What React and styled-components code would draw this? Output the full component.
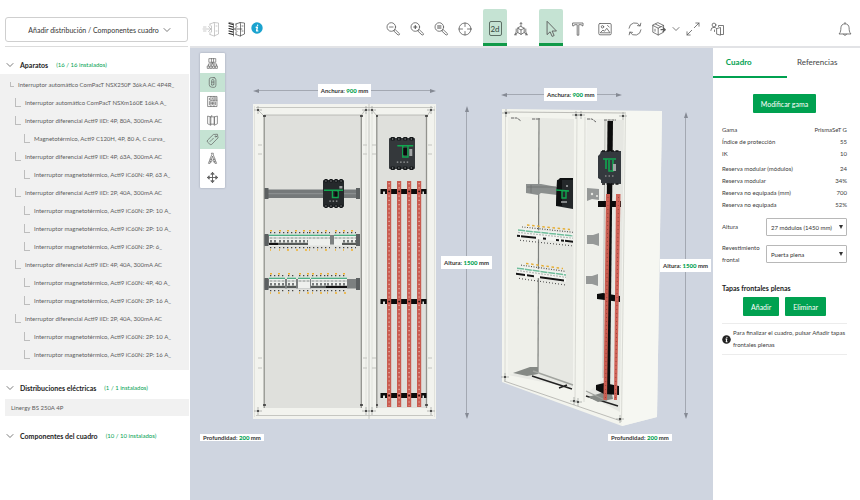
import React from 'react'
import styled, { createGlobalStyle } from 'styled-components'

const GlobalStyle = createGlobalStyle`
  * {
    box-sizing: border-box;
  }
  body {
    margin: 0;
    background: #fff;
    color: #3c3c3c;
    font-family: Lato, "Open Sans", sans-serif;
    font-size: 6px;
    line-height: 12px;
  }
  button, select {
    font-family: inherit;
    cursor: pointer;
  }
`

const green = '#00a150'
const mint = '#c5e3d3'

/* ---------- data ---------- */

const devices = [
  { level: 0, text: 'Interruptor automático ComPacT NSX250F 36kA AC 4P4R_' },
  { level: 1, text: 'Interruptor automático ComPacT NSXm160E 16kA A_' },
  { level: 1, text: 'Interruptor diferencial Acti9 iID: 4P, 80A, 300mA AC' },
  { level: 2, text: 'Magnetotérmico, Acti9 C120H, 4P, 80 A, C curva_' },
  { level: 1, text: 'Interruptor diferencial Acti9 iID: 4P, 63A, 300mA AC' },
  { level: 2, text: 'Interruptor magnetotérmico, Acti9 iC60N: 4P, 63 A_' },
  { level: 1, text: 'Interruptor diferencial Acti9 iID: 2P, 40A, 300mA AC' },
  { level: 2, text: 'Interruptor magnetotérmico, Acti9 iC60N: 2P: 10 A_' },
  { level: 2, text: 'Interruptor magnetotérmico, Acti9 iC60N: 2P: 10 A_' },
  { level: 2, text: 'Interruptor magnetotérmico, Acti9 iC60N: 2P: 6_' },
  { level: 1, text: 'Interruptor diferencial Acti9 iID: 4P, 40A, 300mA AC' },
  { level: 2, text: 'Interruptor magnetotérmico, Acti9 iC60N: 4P, 40 A_' },
  { level: 2, text: 'Interruptor magnetotérmico, Acti9 iC60N: 2P: 16 A_' },
  { level: 1, text: 'Interruptor diferencial Acti9 iID: 2P, 40A, 300mA AC' },
  { level: 2, text: 'Interruptor magnetotérmico, Acti9 iC60N: 2P: 10 A_' },
  { level: 2, text: 'Interruptor magnetotérmico, Acti9 iC60N: 2P: 16 A_' },
]

const general = [
  ['Gama', 'PrismaSeT G'],
  ['Índice de protección', '55'],
  ['IK', '10'],
]

const reserve = [
  ['Reserva modular (módulos)', '24'],
  ['Reserva modular', '34%'],
  ['Reserva no equipada (mm)', '700'],
  ['Reserva no equipada', '52%'],
]

/* ---------- icons ---------- */

const Svg = styled.svg`
  display: block;
  flex: none;
  fill: none;
  stroke: ${props => props.$color || '#5a5a5a'};
  stroke-width: ${props => props.$weight || 0.8};
  stroke-linecap: round;
  stroke-linejoin: round;
`

function Icon({ size = 16, box = 16, color, weight, children }) {
  return (
    <Svg width={size} height={size} viewBox={`0 0 ${box} ${box}`} $color={color} $weight={weight} aria-hidden="true">
      {children}
    </Svg>
  )
}

const Chevron = ({ size = 8 }) => (
  <Icon size={size} box={8}><path d="M1 2.5 4 5.5 7 2.5" /></Icon>
)

const Lens = ({ children }) => (
  <Icon>
    <circle cx="6.3" cy="6" r="4.3" />
    <path d="M9 9.7 10.2 8.6 14.6 12.8Q14.9 13.8 13.5 14Z" />
    {children}
  </Icon>
)

const DoorIcon = ({ faded }) => (
  <Icon size={18} box={18} color={faded ? '#b5b5b5' : '#444'} weight={0.7}>
    <path d="M8 4 12 2.5 16.5 3V14L12 16 8 14.5M12 2.5 12.5 4V16M8 4V6M8 12V14.5M14 6H15M14 11H15" />
    {faded
      ? <path d="M1 9H9M6.5 6.5 9 9 6.5 11.5M1.5 7H4M1.5 11H4M9.5 6V12" />
      : <path d="M14 9H7M9 6.5 6.5 9 9 11.5" />}
    {!faded && <path stroke="#222" strokeWidth="1.2" d="M1 3.5 5 4.5M1 6 5 7M1 8.500 5 9.500M1 11 5 12M1 13.500 5 14.500" />}
    {!faded && <path d="M1 2.5 5.5 3.5V16" />}
  </Icon>
)

const InfoIcon = ({ size, fill }) => (
  <Icon size={size} box={12} color="#fff" weight={1.4}>
    <circle cx="6" cy="6" r="5.7" fill={fill} stroke="none" />
    <path d="M6.6 3.1V3.2M5.2 5.2H6.4L5.6 8.9H6.8" />
  </Icon>
)

const TargetIcon = () => (
  <Icon>
    <circle cx="8" cy="8" r="6" />
    <path d="M8 2V5.5M8 10.5V14M2 8H5.5M10.5 8H14" />
  </Icon>
)

const TwoD = styled.span`
  display: grid;
  place-items: center;
  width: 13px;
  height: 15px;
  border: 1px solid #5c6f65;
  border-radius: 2px;
  color: #34473d;
  font-size: 8px;
`

const CubeIcon = () => (
  <Icon>
    <path d="M8 5.500 11.200 7.200V11.500L8 13.400 4.800 11.500V7.200ZM8 9V13.400M4.800 7.200 8 9 11.200 7.200" />
    <path d="M8 5.500V2M7 2.800 8 1.600 9 2.800M4.800 11.500 2 13.600M3.200 8V11L1.700 13.800H3.500M11.200 11.500 14 13.600M12.800 8V11L14.300 13.800H12.500" />
  </Icon>
)

const PointerIcon = () => (
  <Icon size={18}>
    <path d="M4.5 1.5V13L7.2 10.5 9 14.6 10.8 13.8 9 9.8H12.5Z" />
  </Icon>
)

const TextIcon = () => (
  <Icon><path d="M3 2H13V4.8H12L11.5 3.7H8.800V14.200H7.200V3.700H4.5L4 4.8H3Z" /></Icon>
)

const ImageIcon = () => (
  <Icon>
    <rect x="1.8" y="2.5" width="12.4" height="11.3" rx="1.2" />
    <circle cx="5.5" cy="5.8" r="1.2" />
    <path d="M3.5 11.5 6 9 7.4 10.3 9.8 7.3 12.8 11.5ZM10.5 4.5 12.2 6" />
  </Icon>
)

const RefreshIcon = () => (
  <Icon>
    <path d="M2 7.2A6 6 0 0 1 13 4.6M13.8 2.2 13.2 5 10.5 4.6M14 8.8A6 6 0 0 1 3 11.4M2.2 13.8 2.8 11 5.5 11.4" />
  </Icon>
)

const BoxIcon = () => (
  <Icon>
    <path d="M7.2 1.8 12.6 4.4V11.2L7.2 14 1.8 11.2V4.4ZM1.8 4.4 7.2 7.2 12.6 4.4M7.2 7.2V14M4.5 3.1 9.9 5.8M4 8.2V10.2" />
    <path strokeWidth="1.2" d="M10 8.7H14M12 6.8 14.3 8.7 12 10.6" />
  </Icon>
)

const ExpandIcon = () => (
  <Icon>
    <path d="M9.3 6.7 14 2M10.8 2H14V5.2M6.7 9.3 2 14M2 10.8V14H5.2" />
  </Icon>
)

const UserDoorIcon = () => (
  <Icon>
    <circle cx="5" cy="4" r="1.9" />
    <path d="M1.8 9.500Q1.8 6.300 5 6.300 6.800 6.300 7.500 7.500M9.500 5.500V4.500H14.500V13.500H12M8 7.500 11.500 6.500V14.200L8 13.200ZM5.500 9V10.500" />
  </Icon>
)

const BellIcon = () => (
  <Icon>
    <path d="M2.3 12.7C3.8 11.2 3.8 9 3.9 6.8 4 4.4 5.6 2.8 8 2.8S12 4.4 12.1 6.8C12.2 9 12.2 11.2 13.7 12.7ZM8 2.8V1.5M6.5 13.2Q8 16 9.5 13.2" />
  </Icon>
)

const viewTools = [
  {
    name: 'Esquema',
    icon: <path d="M4 2H12V6.500H4ZM6.700 2V6.500M9.300 2V6.500M8 6.500V8.500M3 11V8.500H13V11M6.300 8.500V11M9.700 8.500V11M2 11H4V14H2ZM5.300 11H7.300V14H5.300ZM8.700 11H10.700V14H8.700ZM12 11H14V14H12Z" />,
  },
  {
    name: 'Cableado',
    active: true,
    icon: <path d="M10 2H6.5Q4 2 4 4.5V10.5Q4 13.5 7 13.8L10 14Q12.2 13.8 12.2 11.3V4.7Q12 2.2 10 2ZM7 11V5.5Q7 4.3 8.3 4.3T9.7 5.5V10.5M7 7.5H9.7M7 10.8Q8.5 12.8 9.7 10.5" />,
  },
  {
    name: 'Equipos',
    icon: <path d="M2.5 1.8H13.5V14.2H2.5ZM6 1.8V14.2M9.8 1.8V14.2M4.2 4V6M4.2 8V12M7.9 3.5V5M6 6.5H13.5M11 3.5H12.4M11 5H12.4M11.6 8.5V12M7.9 8.5V12M6 10H9.8" />,
  },
  {
    name: 'Puertas',
    icon: <path d="M5.5 3.5H10.5V12.5H5.5ZM5.5 3.5 2 2.5V12L5.5 13.7ZM10.5 3.5 14 2.5V12L10.5 13.7ZM7 3V1.8" />,
  },
  {
    name: 'Etiquetas',
    active: true,
    icon: (
      <>
        <path d="M9.5 1.8 14 1.5 14.8 6 7 14Q6 14.8 5 14L1.7 11Q1 10 1.8 9ZM5 10.5 6.2 9.2M7.2 8.5 9 6.5" />
        <circle cx="12" cy="4.3" r="0.8" />
      </>
    ),
  },
  {
    name: 'Cotas',
    icon: <path d="M7 1.5H9V3.5L13 14H11L8 5 5 14H3L7 3.5ZM5 9Q8 11.5 11 9M4.5 12H7M9 12H11.5" />,
  },
  {
    name: 'Mover',
    icon: <path strokeWidth="1.1" d="M8 1.8V14.2M1.8 8H14.2M6.2 3.6 8 1.6 9.8 3.6ZM6.2 12.4 8 14.4 9.8 12.4ZM3.6 6.2 1.6 8 3.6 9.8ZM12.4 6.2 14.4 8 12.4 9.8Z" />,
  },
]

/* ---------- page layout ---------- */

const Page = styled.div`
  display: grid;
  grid-template-columns: 190px minmax(0, 1fr);
  min-height: 100vh;
`

const Sidebar = styled.aside`
  padding-top: 17px;
`

const Workspace = styled.div`
  display: flex;
  flex-direction: column;
  min-width: 0;
`

const Body = styled.div`
  flex: 1;
  display: flex;
`

/* ---------- sidebar ---------- */

const AddBar = styled.div`
  margin: 0 2px 8px 5px;
  padding-bottom: 4px;
  border-bottom: 1px solid #dcdcdc;
`

const AddButton = styled.button`
  display: flex;
  align-items: center;
  justify-content: center;
  gap: 4px;
  width: 100%;
  height: 25px;
  padding: 0 0 0 6px;
  border: 1px solid #cfcfcf;
  border-radius: 3px;
  background: #fff;
  color: #333;
  font-size: 7px;
`

const SectionHead = styled.h2`
  display: flex;
  align-items: center;
  height: 19px;
  margin: 0;
  padding-left: 6px;
  font-size: 7px;
  font-weight: 700;
  color: #222;
`

const SectionName = styled.span`
  margin: 0 8px 0 6px;
`

const Count = styled.span`
  color: ${green};
  font-size: 6px;
  font-weight: 400;
`

const Tree = styled.ul`
  list-style: none;
  margin: 0 1px 8px 0;
  padding: 2px 0 6px;
  background: #f1f1f1;
`

const indents = [10, 15, 24]

const TreeRow = styled.li`
  display: flex;
  align-items: center;
  height: 18px;
  padding-left: ${props => indents[props.$level]}px;
  color: #5c5c5c;
  white-space: nowrap;

  &::before {
    content: '';
    width: ${props => (props.$level ? 5 : 3)}px;
    height: ${props => (props.$level ? 8 : 4)}px;
    margin: 0 4px 2px 0;
    border-left: 1px solid #bdbdbd;
    border-bottom: 1px solid #bdbdbd;
  }
`

const Distribution = styled.div`
  margin: 2px 1px 10px 5px;
  padding: 0 6px;
  line-height: 17px;
  background: #f1f1f1;
  color: #5c5c5c;
`

function Section({ title, count, children }) {
  return (
    <section>
      <SectionHead>
        <Chevron />
        <SectionName>{title}</SectionName>
        <Count>{count}</Count>
      </SectionHead>
      {children}
    </section>
  )
}

/* ---------- header ---------- */

const Header = styled.header`
  display: flex;
  align-items: flex-end;
  justify-content: space-between;
  height: 48px;
  padding: 0 3px 0 9px;
  border-bottom: 2px solid #e2e3e6;
`

const Tools = styled.div`
  display: flex;
  align-items: center;
  gap: ${props => props.$gap || 0}px;
`

const MainTools = styled(Tools)`
  padding-left: 14px;
`

const ToolButton = styled.button`
  display: grid;
  place-items: center;
  width: ${props => (props.$narrow ? 10 : 24)}px;
  height: 37px;
  padding: 5px 0 0;
  border: 0;
  border-bottom: 3px solid ${props => (props.$active ? '#109a48' : 'transparent')};
  border-radius: 2px 2px 0 0;
  background: ${props => (props.$active ? mint : 'transparent')};
  background-clip: padding-box;
`

function Tool({ name, active, narrow, children }) {
  return (
    <ToolButton type="button" aria-label={name} $active={active} $narrow={narrow}>
      {children}
    </ToolButton>
  )
}

/* ---------- canvas ---------- */

const Canvas = styled.main`
  position: relative;
  flex: 1;
  display: flex;
  align-items: flex-start;
  justify-content: center;
  gap: 11px;
  padding: 36px 4px 0 10px;
  background: #cfd5e0;
`

const ViewBar = styled.div`
  position: absolute;
  top: 5px;
  left: 10px;
  width: 25px;
  padding: 1px 0;
  border-radius: 1px;
  background: #fff;
  box-shadow: 0 0 2px rgba(60, 70, 90, 0.4);
`

const ViewButton = styled.button`
  display: grid;
  place-items: center;
  width: 100%;
  height: 19px;
  padding: 0;
  border: 0;
  background: ${props => (props.$active ? mint : '#fff')};
`

const View = styled.figure`
  display: grid;
  grid-template-columns: ${props => props.$columns};
  margin: 0;
  padding-top: ${props => props.$top || 0}px;
`

const DimTag = styled.span`
  flex: none;
  padding: 0 3px;
  line-height: 13px;
  background: #fff;
  color: #333;
  font-weight: 700;
  white-space: nowrap;

  b {
    color: ${green};
  }
`

const WidthDim = styled.div`
  grid-column: ${props => props.$column};
  display: flex;
  align-items: center;
  width: ${props => props.$width};
  margin-bottom: 7px;
`

const HeightDim = styled.div`
  display: flex;
  flex-direction: column;
  align-items: center;
  padding: ${props => props.$pad};
`

const DepthDim = styled.div`
  grid-column: 1 / -1;
  margin: ${props => props.$margin};
`

const LineH = styled.span`
  flex: ${props => props.$grow || 1};
  height: 1px;
  background: #a3a8b2;
`

const LineV = styled.span`
  flex: ${props => props.$grow || 1};
  width: 1px;
  background: #a3a8b2;
`

const Drawing = styled.svg`
  display: block;
  grid-column: ${props => props.$column};
  width: 100%;
`

const arrows = {
  left: 'M0 3 6 1V5Z',
  right: 'M6 3 0 1V5Z',
  up: 'M3 0 5 6H1Z',
  down: 'M3 6 5 0H1Z',
}

const Arrow = ({ to }) => (
  <svg width="6" height="6" viewBox="0 0 6 6" aria-hidden="true"><path d={arrows[to]} fill="#858a94" /></svg>
)

const Tag = ({ label, value }) => <DimTag>{label}: <b>{value}</b> mm</DimTag>

function Width({ column, width, before }) {
  return (
    <WidthDim $column={column} $width={width}>
      <Arrow to="left" /><LineH $grow={before} /><Tag label="Anchura" value="900" /><LineH /><Arrow to="right" />
    </WidthDim>
  )
}

function Height({ pad, after }) {
  return (
    <HeightDim $pad={pad}>
      <Arrow to="up" /><LineV /><Tag label="Altura" value="1500" /><LineV $grow={after} /><Arrow to="down" />
    </HeightDim>
  )
}

// bolted corner seen at every end of the frame posts
const Corner = ({ x, y }) => (
  <g>
    <path d={`M${x - 4} ${y}H${x + 4}M${x} ${y - 4}V${y + 4}`} stroke="#8c8d89" strokeWidth="0.6" />
    <circle cx={x} cy={y} r="1.1" fill="#333" />
  </g>
)

function Breaker({ x, y, w, h, big }) {
  const poles = [0, 1, 2, 3]
  return (
    <g transform={`translate(${x} ${y})`}>
      <rect y="1" width={w} height={h - 2} rx="1" fill={big ? '#34383b' : '#25292b'} />
      {poles.map(p => (
        <g key={p}>
          <rect x={w * (0.06 + p * 0.24)} y="0" width={w * 0.17} height="3.5" rx="1" fill="#15181a" />
          <rect x={w * (0.06 + p * 0.24)} y={h - 3.5} width={w * 0.17} height="3.5" rx="1" fill="#15181a" />
          <circle cx={w * (0.14 + p * 0.24)} cy="2" r="0.7" fill="#8b8f90" />
          <circle cx={w * (0.14 + p * 0.24)} cy={h - 2} r="0.7" fill="#8b8f90" />
        </g>
      ))}
      <path
        d={big
          ? `M${w * 0.32} 8.7H${w * 0.93}M${w * 0.53} 8.7V20H${w * 0.73}V8.7`
          : `M1 11.3H${w - 1}M${w * 0.45} 11.3V18.5H${w * 0.72}V11.3`}
        fill="none" stroke="#11a750" strokeWidth="1.4"
      />
      <rect x={w * 0.55} y={big ? 11 : 13} width={w * 0.14} height={big ? 7 : 4.5} fill="#0b0c0d" />
      <rect x={w * 0.78} y={big ? 12 : 7} width="3" height={big ? 7 : 2.5} fill="#a2a5a6" />
      <path d={`M${w * 0.3} ${h * 0.76}H${w * 0.75}`} stroke="#9da0a1" strokeWidth="1.2" strokeDasharray="1.5 1.8" />
    </g>
  )
}

// one block of DIN modules: terminals, label strip and toggles
function Modules({ x, y, w, blank, dark }) {
  return (
    <g transform={`translate(${x} ${y})`}>
      <path d={`M1 0.8H${w}`} stroke="#efb02e" strokeWidth="1.5" strokeDasharray="2 6" />
      <path d={`M1 20H${w}`} stroke="#efb02e" strokeWidth="1.5" strokeDasharray="2 7" strokeDashoffset="1" />
      <path d={`M1 2.6H${w}M1 17.6H${w}`} stroke="#444" strokeWidth="1.3" strokeDasharray="1.3 2.7" />
      <rect y="4" width={w} height="11.5" fill="#eef0ed" />
      <rect y="4.6" width={w} height="1.4" fill="#4fae84" />
      <path d={`M0.5 8H${w}`} stroke="#b9bdba" strokeWidth="2" strokeDasharray="3 1" />
      {!blank && <path d={`M1 11.2H${w}`} stroke="#777b7b" strokeWidth="2.5" strokeDasharray="2 2" />}
      {!blank && <rect y="12.8" width={w} height="2.2" fill={dark ? '#111' : '#555957'} />}
    </g>
  )
}

const barXs = [387, 397, 407, 417]

function FrontCabinet() {
  return (
    <Drawing $column="2" viewBox="253 104 183 315" role="img" aria-label="Vista frontal del cuadro">
      <rect x="253" y="104" width="183" height="315" fill="#f2f3ee" />
      <path d="M256 107.5H433M256 415.5H433M369 104V419" stroke="#b9bab5" strokeWidth="0.8" />
      <path d="M254.5 106V417M434.5 106V417M366 112V410M372 112V410" stroke="#dcddd7" strokeWidth="0.8" />
      <rect x="264" y="115" width="98" height="293" fill="#dfe0dc" />
      <rect x="376" y="115" width="51" height="293" fill="#dfe0dc" />
      <path d="M264 115H362M376 115H427" stroke="#aeb0ab" strokeWidth="0.8" />
      <path d="M264.2 115V408M361.3 115V408M376.8 115V408M426.5 115V408" stroke="#92938e" strokeWidth="1.3" />
      <path d="M258 110 264 116M365 110 361 116M372 110 377 116M431 110 427 116" stroke="#a5a6a1" strokeWidth="0.7" />
      {[145, 154, 358, 368].map(y => (
        <path key={y} d={`M258 ${y}H262M363 ${y}H367M372 ${y}H376M428 ${y}H432`} stroke="#c3c4bf" strokeWidth="1" />
      ))}
      {[110, 411].map(y => [258, 366, 372, 431].map(x => <Corner key={`${x}-${y}`} x={x} y={y} />))}
      {[116, 405].map(y => (
        <path key={y} d={`M263 ${y}H266M360 ${y}H363M376 ${y}H378M425 ${y}H428`} stroke="#333" strokeWidth="1.4" />
      ))}

      <rect x="266" y="189.5" width="93" height="8.5" fill="#75797a" />
      <path d="M266 193.7H359" stroke="#8f9394" strokeWidth="1" />
      <rect x="264.5" y="188" width="4" height="11" fill="#5c6061" />
      <rect x="356" y="188" width="4" height="11" fill="#5c6061" />
      <Breaker x={323} y={179} w={21} h={29} />
      <Breaker x={389} y={137} w={26} h={33} big />

      {[235, 279].map(y => (
        <g key={y}>
          <rect x="264.5" y={y} width="95.5" height="9.5" fill="#7c8080" />
          <rect x="264.5" y={y - 1} width="4" height="12" fill="#5c6061" />
          <rect x="356" y={y - 1} width="4" height="12" fill="#5c6061" />
        </g>
      ))}
      <Modules x={269} y={230} w={9} dark />
      <Modules x={278} y={230} w={30} />
      <Modules x={308} y={230} w={8} blank />
      <Modules x={316} y={230} w={14} blank />
      <Modules x={334} y={230} w={8} blank />
      <Modules x={342} y={230} w={14} />
      <Modules x={269} y={273} w={16} />
      <Modules x={287} y={273} w={9} />
      <Modules x={298} y={273} w={12} blank />
      <Modules x={311} y={273} w={15} />
      <Modules x={326} y={273} w={21} dark />

      {[189, 299, 393].map(y => (
        <path key={y} d={`M380.5 ${y}H426.5V${y + 5}H424V${y + 2.5}H422.5V${y + 5}H385V${y + 2.5}H383V${y + 5}H380.5Z`} fill="#0c0c0c" />
      ))}
      {barXs.map(x => (
        <g key={x}>
          <rect x={x} y="181" width="4.2" height="226" fill="#c95c50" />
          <path d={`M${x + 2.1} 183V406`} stroke="#efb7ae" strokeWidth="1.2" strokeDasharray="1.2 3" />
          {[191.5, 301.5, 395.5].map(y => <circle key={y} cx={x + 2.1} cy={y} r="1" fill="#3a1410" />)}
        </g>
      ))}
    </Drawing>
  )
}

// row of modules foreshortened by the perspective
function SideModules({ x, y, w, skew, long }) {
  return (
    <g transform={`translate(${x} ${y}) skewY(${skew})`}>
      <path d={`M2 5H${w}V14H0Z`} fill="#f3f4f1" />
      <path d={`M10 1H${w - 3}`} stroke="#e6ae35" strokeWidth="1.5" strokeDasharray="2.5 2.6" />
      <path d={`M5 3.4H${w}`} stroke="#555" strokeWidth="1.1" strokeDasharray="1 1.5" />
      <path d={`M1 7H${w}`} stroke="#6fbd9b" strokeWidth="1.5" strokeDasharray="7 0.8" />
      <path d={`M1 9.3H${w}`} stroke="#b9bdb9" strokeWidth="1.2" strokeDasharray="2 1" />
      <path d={`M0 12.8H${w}`} stroke="#141414" strokeWidth="2" strokeDasharray={long ? '9 2 7 6 24 5' : '3 1 15 7 3 10 3 2'} />
      <path d={`M3 17H${w}`} stroke="#555" strokeWidth="1.1" strokeDasharray="1 2" />
    </g>
  )
}

function SideCabinet() {
  return (
    <Drawing $column="1" viewBox="501 108 161 318" role="img" aria-label="Vista en perspectiva del cuadro">
      <path d="M502 109 662 111 657 417 622 426 502 382Z" fill="#f3f4ee" />
      <path d="M626 111 662 111 657 417 622 426Z" fill="#f6f7f2" />
      <path d="M508 117 574 119 573 388 508 375Z" fill="#e7e8e3" />
      <path d="M508 117H539V371L508 375Z" fill="#eeefe9" />
      <path d="M587 119 624 120 620 412 586 394Z" fill="#e6e7e2" />
      <path d="M587 119H605V378L586 394Z" fill="#eeefea" />
      <path d="M625.5 112 621.5 422M505.5 113 505 380M577 115 575 400M585 117 584 402" stroke="#d6d7d1" strokeWidth="0.9" fill="none" />
      <path d="M504 112 625 113M504 381 621 421" stroke="#b5b6b1" strokeWidth="0.9" />
      <path d="M539 118 538 372" stroke="#7d807d" strokeWidth="1.2" />
      <path d="M605 120 603 378" stroke="#b3b5b0" strokeWidth="0.9" />
      <path d="M511 118H517L521 121M532 119H540M587 119H592L596 122M604 120H616" stroke="#555" strokeWidth="0.9" fill="none" strokeDasharray="3 0.7" />
      {[[506, 113], [576, 115], [581, 115], [623, 116], [505, 377], [574, 401], [578, 402], [620, 419]].map(([x, y]) => (
        <Corner key={`${x}-${y}`} x={x} y={y} />
      ))}

      <path d="M513 373 530 367 538 367V374L527 376Z" fill="#858985" />
      <path d="M533 371 573 385" stroke="#a1a49f" strokeWidth="1.4" />
      <path d="M532 376 572 389M559 388 567 385M586 396 618 406" stroke="#222" strokeWidth="1.4" />
      <path d="M588 397 611 390 613 399 598 402Z" fill="#858985" />
      <path d="M586 391 607 401" stroke="#a1a49f" strokeWidth="1.2" />

      <path d="M526 184 541 184 557 187V195L541 193 538 195 526 193Z" fill="#8b8f8e" />
      <path d="M527 187H556M531 185V193" stroke="#6e7271" strokeWidth="0.8" />
      <g>
        <path d="M557 180 573 178V209L556 206Z" fill="#24282a" />
        <path d="M557 181 560 178H573V180H562V206H556Z" fill="#0e1011" />
        <path d="M556 190 569 191M562 191V198H566V191" stroke="#11a750" strokeWidth="1.4" fill="none" />
        <path d="M566 186H568M561 202H567" stroke="#a4a7a8" strokeWidth="1.4" />
      </g>

      <path d="M607.5 121H613L610 394H605Z" fill="#0c0c0c" />
      <path d="M587 188 599 189V200L592 199 587 201Z" fill="#969998" />
      <circle cx="592" cy="194" r="1.2" fill="#e7e8e3" />
      <circle cx="597" cy="196" r="1.1" fill="#e7e8e3" />
      <path d="M587 235H593L599 233V246L593 244H587Z" fill="#969998" />
      <path d="M586 276H592L598 274V286L592 284H586Z" fill="#969998" />

      <g>
        <path d="M601 151 621 151V184L601 183V180L598 178V156L600 154Z" fill="#34393e" />
        <path d="M603 159H616M606 159V169M609 160V171H613V160" stroke="#11a750" strokeWidth="1.6" fill="none" />
        <rect x="613" y="164" width="3" height="7" fill="#a2a5a6" />
        <path d="M605 176H615" stroke="#aaa" strokeWidth="1.2" strokeDasharray="1.5 2" />
        <path d="M602 151H620M602 184H620" stroke="#0f1112" strokeWidth="1.5" strokeDasharray="3 1.5" />
      </g>

      <path d="M598 201H621V207H598ZM597 294 603 293 620 296V302L597 299ZM596 385 604 383 619 386V395L604 394 596 390Z" fill="#0c0c0c" />
      <path d="M606 194H610L607 400H603.500Z" fill="#c95c50" />
      <path d="M616 194H620.500L617 400H614Z" fill="#cf6257" />
      <path d="M608 197 605.500 398M618.500 197 615.500 398" stroke="#8f3d34" strokeWidth="0.8" strokeDasharray="1 3" />

      <SideModules x={517} y={223} w={56} skew={6} />
      <SideModules x={516} y={261} w={50} skew={8} long />
    </Drawing>
  )
}

/* ---------- right panel ---------- */

const Panel = styled.aside`
  width: 147px;
  flex: none;
  padding-bottom: 10px;
`

const Tabs = styled.div`
  display: grid;
  grid-template-columns: 1fr 1fr;
`

const Tab = styled.button`
  height: 30px;
  padding: ${props => (props.$active ? '0 22px 0 0' : '0 12px 0 0')};
  border: 0;
  border-bottom: 2px solid ${props => (props.$active ? green : 'transparent')};
  background: none;
  color: ${props => (props.$active ? green : '#444')};
  font-size: 8px;
  font-weight: ${props => (props.$active ? 700 : 400)};
`

const PanelBody = styled.div`
  padding: 16px 13px 0 9px;
`

const Buttons = styled.div`
  display: flex;
  justify-content: center;
  gap: 6px;
`

const GreenButton = styled.button`
  height: 19px;
  padding: 0 8px;
  border: 0;
  border-radius: 1px;
  background: ${green};
  color: #fff;
  font-size: 7px;
`

const Facts = styled.dl`
  margin: ${props => props.$top}px 0 0;
`

const Fact = styled.div`
  display: flex;
  justify-content: space-between;

  dd {
    margin: 0;
  }
`

const Field = styled.div`
  display: grid;
  grid-template-columns: 44px 1fr;
  align-items: center;
  margin-top: ${props => props.$top}px;
`

const SelectBox = styled.div`
  position: relative;

  &::after {
    content: '';
    position: absolute;
    top: 7px;
    right: 4px;
    border: 2px solid transparent;
    border-top: 4px solid #333;
    border-bottom: 0;
    pointer-events: none;
  }
`

const Select = styled.select`
  appearance: none;
  display: block;
  width: 100%;
  height: 18px;
  padding: 0 4px;
  border: 1px solid #b8b8b8;
  border-radius: 1px;
  background: #fff;
  color: #333;
  font-size: 6px;
`

const PanelTitle = styled.h3`
  margin: 16px 0 3px;
  color: #222;
  font-size: 7px;
  font-weight: 700;
`

const Note = styled.p`
  display: flex;
  align-items: center;
  gap: 2px;
  margin: 7px 0 0;
  padding: 3px 0;
  border-top: 1px solid #ececec;
  border-bottom: 1px solid #ececec;
`

const FactList = ({ rows, top }) => (
  <Facts $top={top}>
    {rows.map(([name, value]) => (
      <Fact key={name}><dt>{name}</dt><dd>{value}</dd></Fact>
    ))}
  </Facts>
)

function SelectField({ id, label, value, top }) {
  return (
    <Field $top={top}>
      <label htmlFor={id}>{label}</label>
      <SelectBox>
        <Select id={id} defaultValue={value}>
          <option>{value}</option>
        </Select>
      </SelectBox>
    </Field>
  )
}

export default function App() {
  return (
    <>
      <GlobalStyle />
      <Page>
        <Sidebar>
          <AddBar>
            <AddButton type="button">
              Añadir distribución / Componentes cuadro
              <Chevron />
            </AddButton>
          </AddBar>
          <Section title="Aparatos" count="(16 / 16 instalados)">
            <Tree>
              {devices.map((device, i) => (
                <TreeRow key={i} $level={device.level}>{device.text}</TreeRow>
              ))}
            </Tree>
          </Section>
          <Section title="Distribuciones eléctricas" count="(1 / 1 instalados)">
            <Distribution>Linergy BS 250A 4P</Distribution>
          </Section>
          <Section title="Componentes del cuadro" count="(10 / 10 instalados)" />
        </Sidebar>

        <Workspace>
          <Header>
            <Tools $gap={2}>
              <Tool name="Abrir puerta"><DoorIcon faded /></Tool>
              <Tool name="Cerrar puerta"><DoorIcon /></Tool>
              <InfoIcon size={12} fill="#1ba3cf" />
            </Tools>
            <MainTools $gap={6}>
              <Tools>
                <Tool name="Alejar"><Lens><path d="M4.500 6H8.100" /></Lens></Tool>
                <Tool name="Acercar"><Lens><path strokeWidth="1.200" d="M4.800 6H7.800M6.300 4.500V7.500" /></Lens></Tool>
                <Tool name="Zoom a selección"><Lens><path d="M4.600 4.800H8M4.600 6H8M4.600 7.200H8" /></Lens></Tool>
                <Tool name="Centrar"><TargetIcon /></Tool>
              </Tools>
              <Tools $gap={2}>
                <Tool name="Vista 2d" active><TwoD>2d</TwoD></Tool>
                <Tool name="Vista 3d"><CubeIcon /></Tool>
              </Tools>
              <Tools $gap={3}>
                <Tool name="Seleccionar" active><PointerIcon /></Tool>
                <Tool name="Texto"><TextIcon /></Tool>
                <Tool name="Imagen"><ImageIcon /></Tool>
              </Tools>
              <Tools>
                <Tool name="Actualizar"><RefreshIcon /></Tool>
                <Tool name="Exportar"><BoxIcon /></Tool>
                <Tool name="Más opciones" narrow><Chevron /></Tool>
                <Tool name="Pantalla completa"><ExpandIcon /></Tool>
                <Tool name="Compartir"><UserDoorIcon /></Tool>
              </Tools>
            </MainTools>
            <Tool name="Notificaciones"><BellIcon /></Tool>
          </Header>

          <Body>
            <Canvas>
              <ViewBar>
                {viewTools.map(tool => (
                  <ViewButton key={tool.name} type="button" aria-label={tool.name} $active={tool.active}>
                    <Icon size={13}>{tool.icon}</Icon>
                  </ViewButton>
                ))}
              </ViewBar>

              <View $columns="53px 183px 54px">
                <Width column="2" width="100%" />
                <FrontCabinet />
                <Height pad="2px 0 0 7px" />
                <DepthDim $margin="12px 0 0"><Tag label="Profundidad" value="200" /></DepthDim>
              </View>

              <View $columns="161px 47px" $top={4}>
                <Width column="1 / -1" width="121px" before={2} />
                <SideCabinet />
                <Height pad="4px 0 7px" />
                <DepthDim $margin="5px 0 0 107px"><Tag label="Profundidad" value="200" /></DepthDim>
              </View>
            </Canvas>

            <Panel>
              <Tabs role="tablist">
                <Tab type="button" role="tab" aria-selected="true" $active>Cuadro</Tab>
                <Tab type="button" role="tab" aria-selected="false">Referencias</Tab>
              </Tabs>
              <PanelBody>
                <Buttons>
                  <GreenButton type="button">Modificar gama</GreenButton>
                </Buttons>
                <FactList rows={general} top={11} />
                <FactList rows={reserve} top={3} />
                <SelectField id="altura" label="Altura" value="27 módulos (1450 mm)" top={7} />
                <SelectField id="frontal" label="Revestimiento frontal" value="Puerta plena" top={6} />
                <PanelTitle>Tapas frontales plenas</PanelTitle>
                <Buttons>
                  <GreenButton type="button">Añadir</GreenButton>
                  <GreenButton type="button">Eliminar</GreenButton>
                </Buttons>
                <Note>
                  <InfoIcon size={9} fill="#222" />
                  <span>Para finalizar el cuadro, pulsar Añadir tapas frontales plenas</span>
                </Note>
              </PanelBody>
            </Panel>
          </Body>
        </Workspace>
      </Page>
    </>
  )
}
